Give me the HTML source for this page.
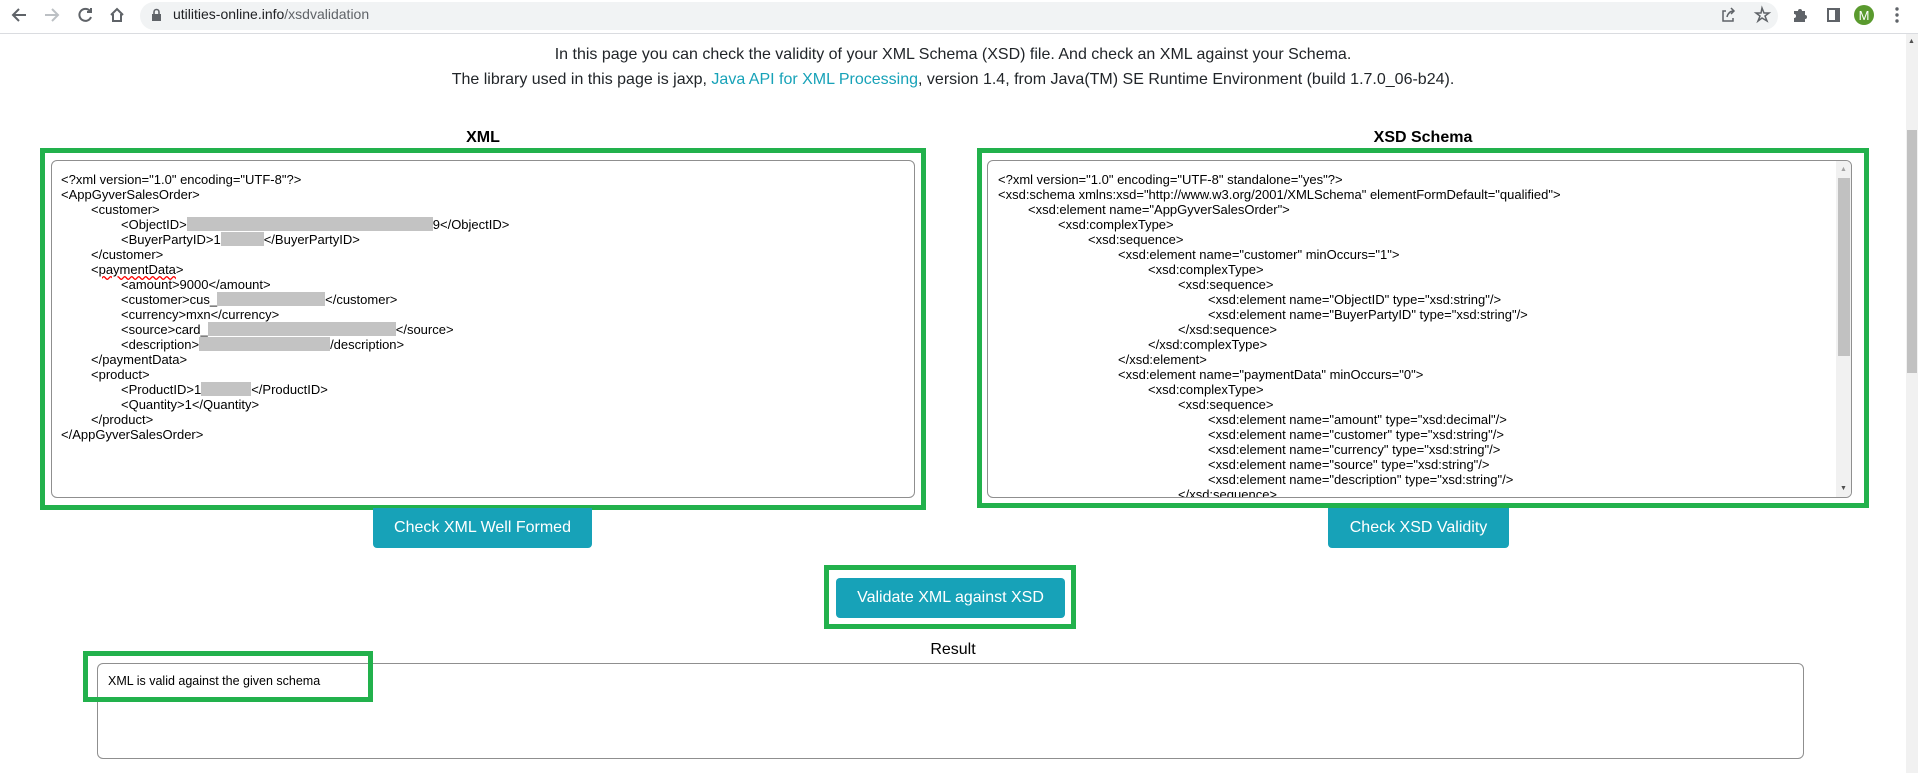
<!DOCTYPE html>
<html><head><meta charset="utf-8">
<style>
*{margin:0;padding:0;box-sizing:border-box}
body{width:1918px;height:773px;overflow:hidden;background:#fff;font-family:"Liberation Sans",Arial,sans-serif;position:relative;color:#212529}
.abs{position:absolute}
.top{left:0;top:0;width:1918px;height:34px;background:#fff;border-bottom:1px solid #dadce0}
.omni{left:140px;top:2px;width:1638px;height:28px;border-radius:14px;background:#f1f3f4}
.url{left:173px;top:6px;font-size:14px;color:#202124}
.url span{color:#5f6368}
.intro{left:0;width:1906px;text-align:center;font-size:16px;color:#212529}
.intro a{color:#17a2b8;text-decoration:none}
.h{font-weight:bold;font-size:16px;color:#000;text-align:center}
.gb{border:5px solid #22b14c}
.ta{border:1px solid #8f8f8f;border-radius:6px;background:#fff;overflow:hidden}
.code{font-size:13px;line-height:15px;color:#000;white-space:nowrap}
.code div{height:15px}
.r{display:inline-block;background:#c3c3c3;height:14px;vertical-align:-2px}
.btn{background:#17a2b8;color:#fff;font-size:16px;text-align:center;border-radius:4px}
</style></head><body>
<div class="abs top"></div>
<svg class="abs" style="left:0;top:0" width="140" height="32">
<g stroke="#5f6368" stroke-width="2" fill="none">
<path d="M26 15H13M19 9l-6 6 6 6"/>
</g>
<g stroke="#bcc0c4" stroke-width="2" fill="none"><path d="M45 15h13M52 9l6 6-6 6"/></g>
<g stroke="#5f6368" stroke-width="2" fill="none">
<path d="M90 11a6 6 0 1 0 1 6"/><path d="M91 8v4h-4"/>
<path d="M111 15l6-6 6 6M113 14v7h8v-7"/>
</g>
</svg>
<div class="abs omni"></div>
<svg class="abs" style="left:151px;top:8px" width="12" height="14"><rect x="1" y="6" width="9" height="7" fill="#5f6368"/><path d="M3 6V4a2.5 2.5 0 0 1 5 0v2" stroke="#5f6368" stroke-width="1.6" fill="none"/></svg>
<div class="abs url">utilities-online.info<span>/xsdvalidation</span></div>
<svg class="abs" style="left:1720px;top:0" width="198" height="32">
<g stroke="#5f6368" stroke-width="1.5" fill="none">
<path d="M6 11H3v10h10v-3M7 17c1-4 3-6 7-6M11 8l3 3-3 3"/>
<path d="M42 8l2 5h5l-4 3 2 5-5-3-4 3 2-5-4-3h5z"/>
</g>
<path d="M74 11h4a2 2 0 0 1 4 0h3v4a2 2 0 0 1 0 4v3h-11v-4a2 2 0 0 0 0-4z" fill="#5f6368"/>
<path d="M107 8h13v14h-13zM109 10v10h6V10z" fill="#5f6368" fill-rule="evenodd"/>
<circle cx="144" cy="15" r="10" fill="#5a9a2e"/>
<text x="144" y="20" font-size="13" fill="#fff" text-anchor="middle" font-family="Liberation Sans">M</text>
<circle cx="177" cy="9" r="1.7" fill="#5f6368"/><circle cx="177" cy="15" r="1.7" fill="#5f6368"/><circle cx="177" cy="21" r="1.7" fill="#5f6368"/>
</svg>

<div class="abs intro" style="top:46px">In this page you can check the validity of your XML Schema (XSD) file. And check an XML against your Schema.</div>
<div class="abs intro" style="top:71px">The library used in this page is jaxp, <a>Java API for XML Processing</a>, version 1.4, from Java(TM) SE Runtime Environment (build 1.7.0_06-b24).</div>

<div class="abs h" style="left:40px;width:886px;top:129px">XML</div>
<div class="abs h" style="left:977px;width:892px;top:129px">XSD Schema</div>

<div class="abs gb" style="left:40px;top:148px;width:886px;height:362px"></div>
<div class="abs ta" style="left:51px;top:160px;width:864px;height:338px"></div>
<div class="abs code" style="left:61px;top:172px">
<div>&lt;?xml version="1.0" encoding="UTF-8"?&gt;</div>
<div>&lt;AppGyverSalesOrder&gt;</div>
<div style="padding-left:30px">&lt;customer&gt;</div>
<div style="padding-left:60px">&lt;ObjectID&gt;<span class="r" style="width:246px"></span>9&lt;/ObjectID&gt;</div>
<div style="padding-left:60px">&lt;BuyerPartyID&gt;1<span class="r" style="width:43px"></span>&lt;/BuyerPartyID&gt;</div>
<div style="padding-left:30px">&lt;/customer&gt;</div>
<div style="padding-left:30px">&lt;<span style="text-decoration:underline wavy red">paymentData</span>&gt;</div>
<div style="padding-left:60px">&lt;amount&gt;9000&lt;/amount&gt;</div>
<div style="padding-left:60px">&lt;customer&gt;cus_<span class="r" style="width:108px"></span>&lt;/customer&gt;</div>
<div style="padding-left:60px">&lt;currency&gt;mxn&lt;/currency&gt;</div>
<div style="padding-left:60px">&lt;source&gt;card_<span class="r" style="width:188px"></span>&lt;/source&gt;</div>
<div style="padding-left:60px">&lt;description&gt;<span class="r" style="width:131px"></span>/description&gt;</div>
<div style="padding-left:30px">&lt;/paymentData&gt;</div>
<div style="padding-left:30px">&lt;product&gt;</div>
<div style="padding-left:60px">&lt;ProductID&gt;1<span class="r" style="width:50px"></span>&lt;/ProductID&gt;</div>
<div style="padding-left:60px">&lt;Quantity&gt;1&lt;/Quantity&gt;</div>
<div style="padding-left:30px">&lt;/product&gt;</div>
<div>&lt;/AppGyverSalesOrder&gt;</div>
</div>

<div class="abs gb" style="left:977px;top:148px;width:892px;height:360px"></div>
<div class="abs ta" style="left:987px;top:160px;width:865px;height:338px">
<div class="abs code" style="left:10px;top:11px">
<div>&lt;?xml version="1.0" encoding="UTF-8" standalone="yes"?&gt;</div>
<div>&lt;xsd:schema xmlns:xsd="http://www.w3.org/2001/XMLSchema" elementFormDefault="qualified"&gt;</div>
<div style="padding-left:30px">&lt;xsd:element name="AppGyverSalesOrder"&gt;</div>
<div style="padding-left:60px">&lt;xsd:complexType&gt;</div>
<div style="padding-left:90px">&lt;xsd:sequence&gt;</div>
<div style="padding-left:120px">&lt;xsd:element name="customer" minOccurs="1"&gt;</div>
<div style="padding-left:150px">&lt;xsd:complexType&gt;</div>
<div style="padding-left:180px">&lt;xsd:sequence&gt;</div>
<div style="padding-left:210px">&lt;xsd:element name="ObjectID" type="xsd:string"/&gt;</div>
<div style="padding-left:210px">&lt;xsd:element name="BuyerPartyID" type="xsd:string"/&gt;</div>
<div style="padding-left:180px">&lt;/xsd:sequence&gt;</div>
<div style="padding-left:150px">&lt;/xsd:complexType&gt;</div>
<div style="padding-left:120px">&lt;/xsd:element&gt;</div>
<div style="padding-left:120px">&lt;xsd:element name="paymentData" minOccurs="0"&gt;</div>
<div style="padding-left:150px">&lt;xsd:complexType&gt;</div>
<div style="padding-left:180px">&lt;xsd:sequence&gt;</div>
<div style="padding-left:210px">&lt;xsd:element name="amount" type="xsd:decimal"/&gt;</div>
<div style="padding-left:210px">&lt;xsd:element name="customer" type="xsd:string"/&gt;</div>
<div style="padding-left:210px">&lt;xsd:element name="currency" type="xsd:string"/&gt;</div>
<div style="padding-left:210px">&lt;xsd:element name="source" type="xsd:string"/&gt;</div>
<div style="padding-left:210px">&lt;xsd:element name="description" type="xsd:string"/&gt;</div>
<div style="padding-left:180px">&lt;/xsd:sequence&gt;</div>
</div>
<div class="abs" style="left:848px;top:0;width:16px;height:338px;background:#f1f1f1"></div>
<div class="abs" style="left:850px;top:17px;width:12px;height:178px;background:#c1c1c1"></div>
<div class="abs" style="left:852px;top:5px;font-size:7px;color:#a3a3a3">▲</div>
<div class="abs" style="left:852px;top:324px;font-size:7px;color:#505050">▼</div>
</div>

<div class="abs btn" style="left:373px;top:508px;width:219px;height:40px;line-height:40px;border-radius:0 0 4px 4px">Check XML Well Formed</div>
<div class="abs btn" style="left:1328px;top:508px;width:181px;height:40px;line-height:40px;border-radius:0 0 4px 4px">Check XSD Validity</div>

<div class="abs gb" style="left:824px;top:565px;width:252px;height:64px"></div>
<div class="abs btn" style="left:836px;top:578px;width:229px;height:40px;line-height:40px">Validate XML against XSD</div>

<div class="abs" style="left:0;width:1906px;text-align:center;top:641px;font-size:16px;color:#000">Result</div>
<div class="abs ta" style="left:97px;top:663px;width:1707px;height:96px"></div>
<div class="abs gb" style="left:83px;top:651px;width:290px;height:51px"></div>
<div class="abs" style="left:108px;top:674px;font-size:12.5px;color:#000">XML is valid against the given schema</div>

<div class="abs" style="left:1906px;top:34px;width:12px;height:739px;background:#f1f1f1"></div>
<div class="abs" style="left:1907px;top:130px;width:10px;height:243px;background:#c1c1c1"></div>
<div class="abs" style="left:1908px;top:38px;font-size:7px;color:#505050">▲</div>
</body></html>
